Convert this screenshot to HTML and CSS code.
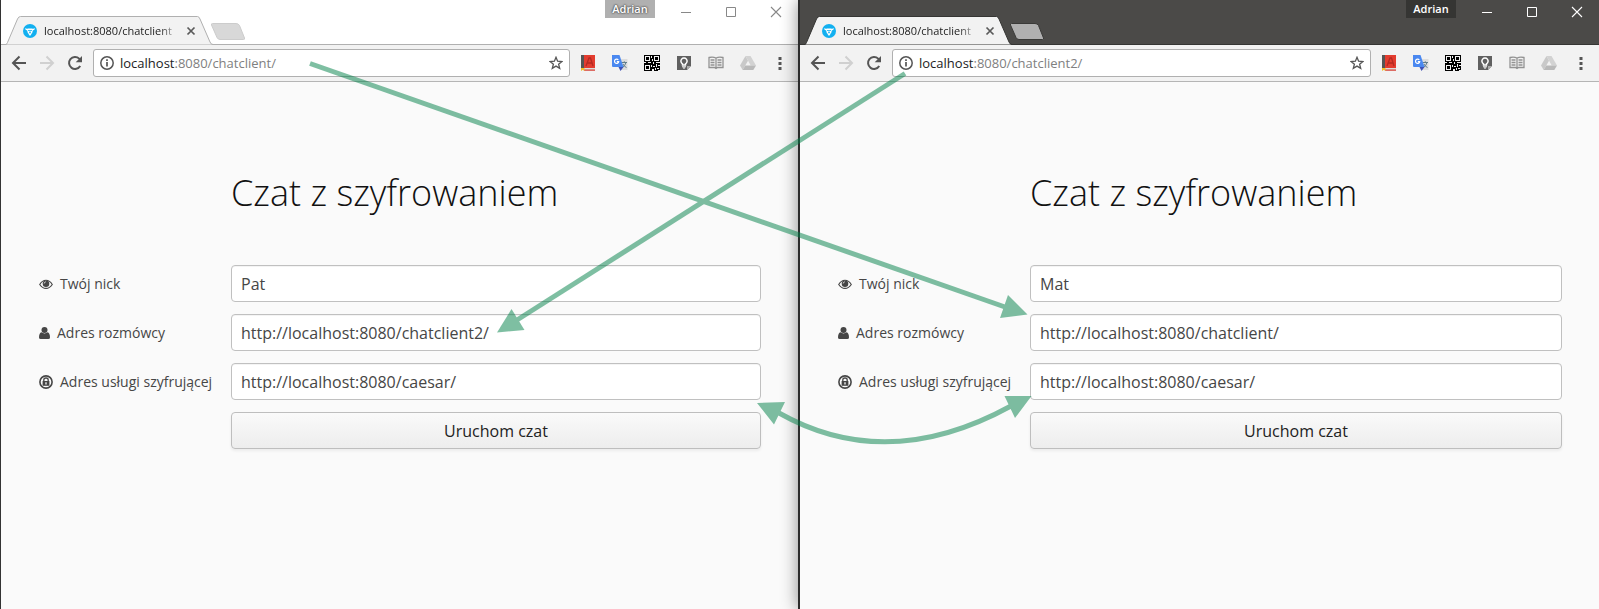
FILE: index.html
```html
<!DOCTYPE html>
<html lang="pl">
<head>
<meta charset="utf-8">
<title>Czat z szyfrowaniem</title>
<link rel="stylesheet" href="styles.css">
</head>
<body>
<svg class="defs" aria-hidden="true">
  <symbol id="tabshape" viewBox="0 0 208 29"><path d="M0 28.500Q1 28 1.500 26.500L11.500 3Q12.500 .5 14.500 .5H191.500Q193 .5 194 3L204 26Q205 28.500 207 28.500H208"/></symbol>
  <symbol id="newtab" viewBox="0 0 36 18"><path d="M2.500 .5H26Q28.500 .5 29.500 2.500L34.500 15Q35 16.500 33.500 16.500H10Q8 16.500 7 14.500L1.500 2Q1 .5 2.500 .5Z"/></symbol>
  <symbol id="favicon" viewBox="0 0 14 14"><circle cx="7" cy="7" r="7" fill="#12b0f0"/><path d="M2 4.200Q3.500 5 5 4.500H9Q10.500 5 12 4.200Q11.800 6.200 9.800 6.500L9.200 9L7 12L4.800 9L4.200 6.500Q2.200 6.200 2 4.200Z" fill="#fff"/><path d="M5 6.500H9M6 9.500L7 7.500L8 9.500" stroke="#12b0f0" stroke-width=".8" fill="none"/></symbol>
  <symbol id="x" viewBox="0 0 10 10"><path d="M1.500 1.500L8.500 8.500M8.500 1.500L1.500 8.500" fill="none" stroke="#5a5a5a" stroke-width="1.700"/></symbol>
  <symbol id="back" viewBox="0 0 16 16"><path d="M15 8H2M8.500 1.500L2 8L8.500 14.500" fill="none" stroke="currentColor" stroke-width="2"/></symbol>
  <symbol id="reload" viewBox="0 0 16 16"><path d="M13.200 11A6 6 0 1 1 12.200 3.600L13.500 5" fill="none" stroke="currentColor" stroke-width="2"/><path d="M15 1V7.300H8.700Z" fill="currentColor"/></symbol>
  <symbol id="info" viewBox="0 0 14 14"><circle cx="7" cy="7" r="6.200" fill="none" stroke="#555" stroke-width="1.500"/><path d="M7 6V10.500M7 3.200V4.900" stroke="#555" stroke-width="1.700"/></symbol>
  <symbol id="star" viewBox="0 0 14 14"><path d="M7 1.300L8.600 5.200L12.900 5.500L9.600 8.200L10.700 12.400L7 10.100L3.300 12.400L4.400 8.200L1.100 5.500L5.400 5.200Z" fill="none" stroke="#555" stroke-width="1.300"/></symbol>
  <symbol id="dict" viewBox="0 0 16 16"><path d="M1 0H4V13H1Z" fill="#555"/><path d="M4 0H15V13H4Z" fill="#e33c2f"/><path d="M6 11L9 3H10.500L13 11M7 8H12" fill="none" stroke="#b52a22" stroke-width="1.300"/><path d="M1 13H15V15.500H3Z" fill="#ddd"/><path d="M4 14.500H15V15.700H4Z" fill="#d8372b"/><path d="M1 13H4.500V16L2.800 14.800L1 16Z" fill="#f5bd27"/></symbol>
  <symbol id="translate" viewBox="0 0 16 16"><path d="M8 4H15.500V15H9Z" fill="#ddd"/><path d="M9.500 7.500H15M12.300 6.300V7.500M14 7.500Q13 11 10.500 12.500M11 9Q12 11.500 14.500 12.500" fill="none" stroke="#607d8b" stroke-width="1"/><path d="M0 0H7.500L11.500 12H1Q0 12 0 11Z" fill="#4a88f0"/><path d="M6.500 12H11.500L8.500 16Z" fill="#3f51b5"/><path d="M6.300 5A2.100 2.100 0 1 0 6.700 6.600H4.800" fill="none" stroke="#fff" stroke-width="1.200"/></symbol>
  <symbol id="qr" viewBox="0 0 16 16" shape-rendering="crispEdges"><path fill="#000" d="M0 0H16V16H0Z"/><path fill="#f2f2f2" d="M1 1H6V6H1ZM10 1H15V6H10ZM1 10H6V15H1ZM7 1H8V3H7ZM8 4H9V6H8ZM0 7H2V8H0ZM4 7H7V8H4ZM9 7H10V9H9ZM12 7H16V8H12ZM7 10H8V12H7ZM9 11H11V12H9ZM12 9H13V12H12ZM14 10H16V11H14ZM8 14H10V16H8ZM11 13H12V15H11ZM13 13H15V14H13ZM14 15H16V16H14Z"/><path fill="#000" d="M2 2H5V5H2ZM11 2H14V5H11ZM2 11H5V14H2Z"/></symbol>
  <symbol id="bulb" viewBox="0 0 16 16"><path d="M1 1H15V11L11 15H1Z" fill="#606060"/><path d="M11 15V11H15Z" fill="#aaa"/><path d="M6.500 10V8.800A3.100 3.100 0 1 1 9.500 8.800V10Z" fill="none" stroke="#fff" stroke-width="1.500"/><path d="M6 11.800H10M7 13H9" stroke="#fff" stroke-width="1"/></symbol>
  <symbol id="book" viewBox="0 0 16 16"><path d="M1 2.500Q5 1.500 8 3Q11 1.500 15 2.500V12.500H9.500L8 13.500L6.500 12.500H1ZM8 3V12.500M2.500 5H6.500M2.500 7.500H6.500M2.500 10H6.500M9.500 5H13.500M9.500 7.500H13.500M9.500 10H13.500" fill="none" stroke="#929292" stroke-width="1.300"/></symbol>
  <symbol id="drive" viewBox="0 0 16 16"><path d="M5.500 1L0 10.500L2.700 15L8 5.800Z" fill="#c9c9c9"/><path d="M5.500 1H10.500L16 10.500H10.700Z" fill="#d2d2d2"/><path d="M5.300 10.500H16L13.300 15H2.700Z" fill="#b9b9b9"/></symbol>
  <symbol id="more" viewBox="0 0 16 16"><path d="M6.500 2H9.500V5H6.500ZM6.500 7H9.500V10H6.500ZM6.500 12H9.500V15H6.500Z" fill="#555"/></symbol>
  <symbol id="min" viewBox="0 0 12 12"><path d="M1 6.500H11" stroke="currentColor"/></symbol>
  <symbol id="max" viewBox="0 0 12 12"><path d="M1.500 1.500H10.500V10.500H1.500Z" fill="none" stroke="currentColor"/></symbol>
  <symbol id="close" viewBox="0 0 12 12"><path d="M1 1L11 11M11 1L1 11" stroke="currentColor" stroke-width="1.100"/></symbol>
  <symbol id="eye" viewBox="0 0 14 14"><path d="M.7 7.500Q3.200 3.200 7 3.200T13.300 7.500Q10.800 11.400 7 11.400T.7 7.500Z" fill="none" stroke="currentColor" stroke-width="1.100"/><circle cx="7" cy="6.700" r="3.300" fill="currentColor"/><path d="M5.200 6.500Q5.300 5 6.800 4.800" stroke="#fafafa" stroke-width=".8" fill="none"/></symbol>
  <symbol id="user" viewBox="0 0 11 14"><circle cx="5.500" cy="4" r="3" fill="currentColor"/><path d="M2.500 6.300Q5.500 8.500 8.500 6.300Q11 7 11 11.500Q11 13 9.300 13H1.700Q0 13 0 11.500Q0 7 2.500 6.300Z" fill="currentColor"/></symbol>
  <symbol id="lock" viewBox="0 0 14 14"><circle cx="7" cy="7" r="6.100" fill="none" stroke="currentColor" stroke-width="1.600"/><path d="M4.800 6.500V5Q4.800 3 7 3T9.200 5V6.500" fill="none" stroke="currentColor" stroke-width="1.300"/><path d="M3.600 6H10.400V10.800H3.600Z" fill="currentColor"/><path d="M7 7.300V9.500" stroke="#fafafa" stroke-width="1.300"/></symbol>
</svg>

<main class="desktop">
  <section class="window light">
    <header class="titlebar">
      <div class="tab">
        <svg class="tab-shape" preserveAspectRatio="none"><use href="#tabshape"/></svg>
        <svg class="favicon"><use href="#favicon"/></svg>
        <span class="tab-title">localhost:8080/chatclient</span>
        <button class="tab-close" aria-label="Zamknij kartę"><svg><use href="#x"/></svg></button>
      </div>
      <button class="newtab" aria-label="Nowa karta"><svg><use href="#newtab"/></svg></button>
      <button class="profile">Adrian</button>
      <div class="controls">
        <button aria-label="Minimalizuj"><svg><use href="#min"/></svg></button>
        <button aria-label="Maksymalizuj"><svg><use href="#max"/></svg></button>
        <button aria-label="Zamknij"><svg><use href="#close"/></svg></button>
      </div>
    </header>
    <nav class="toolbar">
      <div class="nav">
        <button aria-label="Wstecz"><svg><use href="#back"/></svg></button>
        <button class="forward" aria-label="Dalej" disabled><svg><use href="#back"/></svg></button>
        <button aria-label="Odśwież"><svg><use href="#reload"/></svg></button>
      </div>
      <div class="omnibox">
        <svg class="info"><use href="#info"/></svg>
        <div class="url" role="textbox" contenteditable="true" spellcheck="false" aria-label="Adres"><span class="host">localhost</span>:8080/chatclient/</div>
        <button class="star" aria-label="Dodaj zakładkę"><svg><use href="#star"/></svg></button>
      </div>
      <div class="extensions">
        <button aria-label="Słownik"><svg><use href="#dict"/></svg></button>
        <button aria-label="Tłumacz"><svg><use href="#translate"/></svg></button>
        <button aria-label="Kod QR"><svg><use href="#qr"/></svg></button>
        <button aria-label="Notatki"><svg><use href="#bulb"/></svg></button>
        <button aria-label="Czytnik"><svg><use href="#book"/></svg></button>
        <button aria-label="Dysk"><svg><use href="#drive"/></svg></button>
        <button aria-label="Menu"><svg><use href="#more"/></svg></button>
      </div>
    </nav>
    <form class="page">
      <h1>Czat z szyfrowaniem</h1>
      <label for="nick1"><svg><use href="#eye"/></svg>Twój nick</label>
      <input id="nick1" type="text" value="Pat">
      <label for="peer1"><svg class="narrow"><use href="#user"/></svg>Adres rozmówcy</label>
      <input id="peer1" type="text" value="http://localhost:8080/chatclient2/">
      <label for="service1"><svg><use href="#lock"/></svg>Adres usługi szyfrującej</label>
      <input id="service1" type="text" value="http://localhost:8080/caesar/">
      <button class="submit" type="button">Uruchom czat</button>
    </form>
  </section>

  <section class="window dark">
    <header class="titlebar">
      <div class="tab">
        <svg class="tab-shape" preserveAspectRatio="none"><use href="#tabshape"/></svg>
        <svg class="favicon"><use href="#favicon"/></svg>
        <span class="tab-title">localhost:8080/chatclient</span>
        <button class="tab-close" aria-label="Zamknij kartę"><svg><use href="#x"/></svg></button>
      </div>
      <button class="newtab" aria-label="Nowa karta"><svg><use href="#newtab"/></svg></button>
      <button class="profile">Adrian</button>
      <div class="controls">
        <button aria-label="Minimalizuj"><svg><use href="#min"/></svg></button>
        <button aria-label="Maksymalizuj"><svg><use href="#max"/></svg></button>
        <button aria-label="Zamknij"><svg><use href="#close"/></svg></button>
      </div>
    </header>
    <nav class="toolbar">
      <div class="nav">
        <button aria-label="Wstecz"><svg><use href="#back"/></svg></button>
        <button class="forward" aria-label="Dalej" disabled><svg><use href="#back"/></svg></button>
        <button aria-label="Odśwież"><svg><use href="#reload"/></svg></button>
      </div>
      <div class="omnibox">
        <svg class="info"><use href="#info"/></svg>
        <div class="url" role="textbox" contenteditable="true" spellcheck="false" aria-label="Adres"><span class="host">localhost</span>:8080/chatclient2/</div>
        <button class="star" aria-label="Dodaj zakładkę"><svg><use href="#star"/></svg></button>
      </div>
      <div class="extensions">
        <button aria-label="Słownik"><svg><use href="#dict"/></svg></button>
        <button aria-label="Tłumacz"><svg><use href="#translate"/></svg></button>
        <button aria-label="Kod QR"><svg><use href="#qr"/></svg></button>
        <button aria-label="Notatki"><svg><use href="#bulb"/></svg></button>
        <button aria-label="Czytnik"><svg><use href="#book"/></svg></button>
        <button aria-label="Dysk"><svg><use href="#drive"/></svg></button>
        <button aria-label="Menu"><svg><use href="#more"/></svg></button>
      </div>
    </nav>
    <form class="page">
      <h1>Czat z szyfrowaniem</h1>
      <label for="nick2"><svg><use href="#eye"/></svg>Twój nick</label>
      <input id="nick2" type="text" value="Mat">
      <label for="peer2"><svg class="narrow"><use href="#user"/></svg>Adres rozmówcy</label>
      <input id="peer2" type="text" value="http://localhost:8080/chatclient/">
      <label for="service2"><svg><use href="#lock"/></svg>Adres usługi szyfrującej</label>
      <input id="service2" type="text" value="http://localhost:8080/caesar/">
      <button class="submit" type="button">Uruchom czat</button>
    </form>
  </section>

  <svg class="arrows" viewBox="0 0 1599 609" preserveAspectRatio="none" aria-hidden="true">
    <path class="line" d="M310 63.500L1005 307"/><path class="head" d="M1027.500 314.500L1008 295L1000 318Z"/>
    <path class="line" d="M905 73.500L517 320"/><path class="head" d="M497 332.500L511.500 309L524.500 330Z"/>
    <path class="line" d="M779 413Q887 474 1011 406"/><path class="head" d="M757 403L785 402L774 424.500ZM1031.500 396L1004.500 396L1015 418Z"/>
  </svg>
</main>
</body>
</html>
```
FILE: styles.css
```css
* { box-sizing: border-box; }
body { margin: 0; font-family: "Open Sans", "Noto Sans", sans-serif; background: #fafafa; }
button { margin: 0; padding: 0; border: 0; background: none; font: inherit; color: inherit; }
svg { display: block; flex: none; }
.defs { position: absolute; width: 0; height: 0; }

.desktop { position: relative; display: grid; grid-template-columns: 798fr 801fr; min-height: 100vh; overflow: hidden; }
.window { display: flex; flex-direction: column; min-width: 0; background: #fafafa; }
.light { border-left: 1px solid #333; }
.dark { border-left: 2px solid #2b2b2b; position: relative; box-shadow: 0 0 16px rgba(0, 0, 0, .45); }

/* Title bar */
.titlebar { display: flex; align-items: flex-start; height: 45px; padding-left: 5px; border-bottom: 1px solid #b0b0b0; background: #fff; color: #888; }
.dark .titlebar { background: #4b4a48; border-color: #353533; color: #fff; }
.tab { position: relative; display: flex; align-items: center; width: 208px; height: 29px; margin-top: 16px; padding: 0 18px 0 17px; }
.tab-shape { position: absolute; left: 0; top: 0; width: 100%; height: 29px; fill: #f2f2f2; stroke: #b0b0b0; }
.dark .tab-shape { stroke: #353533; }
.favicon { position: relative; width: 14px; height: 14px; }
.tab-title { position: relative; flex: 1; margin-left: 7px; overflow: hidden; white-space: nowrap; font-size: 11px; line-height: 16px; color: #222; -webkit-mask-image: linear-gradient(to right, #000 85%, transparent); mask-image: linear-gradient(to right, #000 85%, transparent); }
.tab-close { position: relative; margin-left: 6px; }
.tab-close svg { width: 10px; height: 10px; }
.newtab { margin: 23px auto 0 -4px; }
.newtab svg { width: 36px; height: 18px; fill: #d8d8d8; stroke: #ccc; }
.dark .newtab svg { fill: #b0b0b0; stroke: #3a3a38; }
.profile { width: 50px; height: 18px; background: #b0b0b0; color: #fff; font-size: 11px; font-weight: 600; line-height: 16px; text-shadow: 0 0 2px #444, 0 0 2px #444; }
.dark .profile { background: #353533; text-shadow: none; }
.controls { display: flex; margin-left: 8px; }
.controls button { display: grid; place-items: center; width: 45px; height: 24px; }
.controls svg { width: 12px; height: 12px; }

/* Toolbar */
.toolbar { display: flex; align-items: center; height: 37px; padding-right: 2px; background: #f2f2f2; border-bottom: 1px solid #b5b5b5; color: #555; }
.nav { display: flex; padding: 0 4px; }
.nav button { display: grid; place-items: center; width: 28px; height: 28px; }
.nav svg { width: 16px; height: 16px; }
.nav .forward { color: #d0d0d0; }
.forward svg { transform: scaleX(-1); }
.omnibox { display: flex; flex: 1; align-items: center; height: 28px; padding: 0 6px; border: 1px solid #b0b0b0; border-radius: 3px; background: #fff; }
.info { width: 14px; height: 14px; }
.url { flex: 1; margin-left: 6px; outline: 0; white-space: nowrap; font-size: 13px; line-height: 20px; color: #808080; }
.host { color: #222; }
.star svg { width: 14px; height: 14px; }
.extensions { display: flex; margin-left: 2px; }
.extensions button { display: grid; place-items: center; width: 32px; height: 28px; }
.extensions svg { width: 16px; height: 16px; }

/* Chat form */
.page { display: grid; grid-template-columns: 192px 1fr; row-gap: 12px; padding: 83px 37px 48px 38px; }
h1 { grid-column: 2; margin: 0 0 32px; font-size: 36px; font-weight: 300; line-height: 56px; color: #111; white-space: nowrap; }
label { display: flex; align-items: center; gap: 7px; font-size: 14px; line-height: 20px; color: #464646; white-space: nowrap; }
label svg { width: 14px; height: 14px; }
label .narrow { width: 11px; }
.page input { width: 100%; height: 37px; padding: 0 9px; border: 1px solid #c0c0c0; border-radius: 4px; background: #fff; box-shadow: inset 0 1px 0 #f4f4f4; font-family: inherit; font-size: 16px; color: #464646; }
.submit { grid-column: 2; height: 37px; border: 1px solid #bebebe; border-radius: 4px; background: linear-gradient(#fafafa, #ededed); box-shadow: 0 2px 3px rgba(0, 0, 0, .06); font-size: 16px; color: #222; }

/* Links between the two windows */
.arrows { position: absolute; left: 0; top: 0; width: 100%; height: 100%; opacity: .5; pointer-events: none; }
.line { fill: none; stroke: #008048; stroke-width: 5; }
.head { fill: #008048; }
```
